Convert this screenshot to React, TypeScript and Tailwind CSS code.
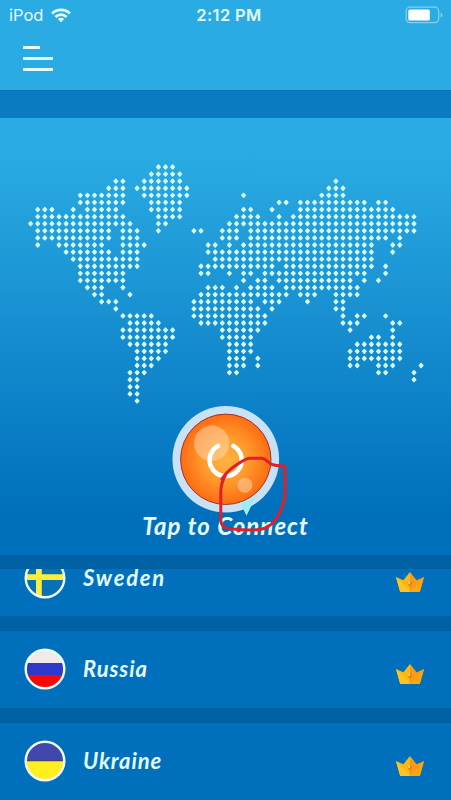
import React from "react";

// Each entry is one map row: inclusive [first, last] column runs.
const MAP_ROWS: number[][][] = [
  [[18, 20]],
  [[17, 21]],
  [[12, 13], [16, 21], [43, 43]],
  [[11, 13], [15, 22], [42, 44]],
  [[7, 13], [16, 22], [30, 30], [41, 44]],
  [[7, 13], [17, 21], [35, 36], [38, 47], [49, 50]],
  [[1, 3], [6, 6], [8, 12], [17, 21], [30, 31], [34, 34], [38, 51]],
  [[1, 13], [18, 21], [29, 32], [35, 35], [37, 54]],
  [[0, 14], [18, 19], [28, 54]],
  [[1, 11], [13, 15], [18, 18], [23, 24], [27, 29], [31, 54]],
  [[1, 11], [13, 15], [27, 29], [31, 50], [52, 52]],
  [[1, 1], [4, 10], [13, 16], [25, 26], [28, 28], [30, 48], [51, 52]],
  [[5, 11], [13, 15], [25, 48], [51, 51]],
  [[6, 15], [26, 48]],
  [[7, 15], [24, 34], [36, 48], [50, 50]],
  [[7, 13], [24, 25], [28, 28], [30, 31], [33, 47], [50, 50]],
  [[7, 13], [30, 30], [32, 33], [35, 45], [47, 47], [49, 49]],
  [[8, 10], [13, 13], [25, 27], [29, 29], [31, 34], [36, 46]],
  [[9, 10], [14, 14], [24, 36], [38, 40], [43, 46]],
  [[10, 12], [23, 31], [33, 35], [39, 39], [43, 44]],
  [[12, 12], [23, 32], [34, 34], [43, 44]],
  [[13, 17], [23, 33], [44, 44], [46, 47], [50, 50]],
  [[14, 18], [24, 33], [44, 46], [51, 52]],
  [[13, 20], [27, 32], [45, 45], [51, 51]],
  [[13, 20], [27, 31], [48, 49], [51, 51]],
  [[14, 19], [28, 31], [46, 52]],
  [[15, 19], [28, 31], [45, 52]],
  [[15, 18], [28, 30], [32, 32], [45, 52]],
  [[15, 17], [28, 30], [32, 32], [45, 46], [49, 51], [55, 55]],
  [[14, 16], [28, 29], [49, 50], [54, 54]],
  [[14, 15], [54, 54]],
  [[14, 15]],
  [[14, 15]],
  [[15, 15]],
];

const mapPath = MAP_ROWS.flatMap((runs, r) =>
  runs.flatMap(([a, b]) =>
    Array.from({ length: b - a + 1 }, (_, i) => {
      const x = 30.6 + (a + i) * 7.1;
      const y = 9 + r * 7.09;
      return `M${x.toFixed(2)} ${(y - 1.9).toFixed(2)}l1.7 1.9l-1.7 1.9l-1.7-1.9z`;
    })
  )
).join("");

function WorldMap() {
  return (
    <svg className="block h-[248px] w-[451px]" viewBox="0 0 451 248">
      <path d={mapPath} fill="#d6fcff" stroke="#d6fcff" strokeWidth="1.5" strokeLinejoin="round" />
    </svg>
  );
}

function StatusBar() {
  return (
    <div className="grid h-[30px] grid-cols-3 items-center pl-[9px] pr-2 text-[#e2fbff]">
      <div className="flex items-center gap-2">
        <span className="font-['Inter',sans-serif] text-[16.5px] leading-none">iPod</span>
        <svg className="h-[15px] w-5" viewBox="0 0 20 15">
          <g fill="none" stroke="#e2fbff" strokeWidth="2.8">
            <path d="M1.1 5.5a12.6 12.6 0 0 1 17.8 0" />
            <path d="M4.4 8.9a7.9 7.9 0 0 1 11.2 0" />
          </g>
          <path d="M10 14.2l-3.2-3.2a4.5 4.5 0 0 1 6.4 0z" fill="#e2fbff" />
        </svg>
      </div>
      <span className="whitespace-nowrap pl-[6px] text-center font-['Inter',sans-serif] text-[16.5px] font-semibold leading-none tracking-[0.35px]">
        2:12 PM
      </span>
      <div className="flex items-center justify-end">
        <svg className="h-[18px] w-[38px]" viewBox="0 0 38 18">
          <rect x="1.1" y="1.2" width="32.6" height="15.4" rx="4" fill="none" stroke="#7fd0f1" strokeWidth="1.3" />
          <rect x="3.3" y="3.4" width="21.5" height="11" rx="1.5" fill="#fff" />
          <path d="M35.6 6.3q2 1 2 2.7t-2 2.7z" fill="#7fd0f1" />
        </svg>
      </div>
    </div>
  );
}

function PowerButton() {
  return (
    <svg className="block size-[108px]" viewBox="172 405 108 108">
      <defs>
        <radialGradient id="orange" cx="0.5" cy="0.5" r="0.5">
          <stop offset="0" stopColor="#ffb340" />
          <stop offset="0.5" stopColor="#ff9a2c" />
          <stop offset="1" stopColor="#fd6c12" />
        </radialGradient>
      </defs>
      <circle cx="225.8" cy="459.2" r="53.3" fill="#c9e1f5" />
      <circle cx="225.8" cy="459.3" r="45.2" fill="url(#orange)" stroke="#a5302a" strokeWidth="1" />
      <circle cx="211.7" cy="443.3" r="17.7" fill="#ffe0c4" fillOpacity="0.45" />
      <circle cx="244.9" cy="485.3" r="7.5" fill="#ffe0c4" fillOpacity="0.45" />
      <path d="M218 446a16 16 0 1 0 15.4 0" fill="none" stroke="#fff" strokeWidth="4.6" strokeLinecap="round" />
    </svg>
  );
}

function Crown() {
  return (
    <svg className="h-5 w-7" viewBox="0 0 28 20">
      <path d="M0 5l7.4 3.2L14 0v20H4.2z" fill="#fdb813" />
      <path d="M28 5l-7.4 3.2L14 0v20h9.8z" fill="#f99a1c" />
      <path d="M4.2 20L0 5l14 15z" fill="#ffc41f" />
      <path d="M14 20L28 5l-4.2 15z" fill="#ffa60d" />
      <path d="M14 7.7l2.6 3.6L14 16l-2.6-4.7z" fill="#e58a0c" />
      <path d="M11.4 11.3L14 8v4.2z" fill="#ffd65a" />
    </svg>
  );
}

const FLAGS: Record<string, React.ReactNode> = {
  Sweden: (
    <>
      <path fill="#0871b3" d="M0 0h42v42H0z" />
      <path fill="#fbed3a" d="M12 0h5.8v42H12zM0 17.3h42v5.8H0z" />
    </>
  ),
  Russia: (
    <>
      <path fill="#efebe8" d="M0 0h42v15H0z" />
      <path fill="#2e39cc" d="M0 15h42v12H0z" />
      <path fill="#fb0505" d="M0 27h42v15H0z" />
    </>
  ),
  Ukraine: (
    <>
      <path fill="#4147ad" d="M0 0h42v21H0z" />
      <path fill="#ffef1f" d="M0 21h42v21H0z" />
      <path fill="#4a4560" d="M0 20.3h42v1H0z" />
    </>
  ),
};

function Flag({ name }: { name: string }) {
  return (
    <svg className="size-[42px] shrink-0" viewBox="0 0 42 42">
      <clipPath id={`flag-${name}`}>
        <circle cx="21" cy="21" r="19.5" />
      </clipPath>
      <g clipPath={`url(#flag-${name})`}>{FLAGS[name]}</g>
      <circle cx="21" cy="21" r="19.3" fill="none" stroke="#effdff" strokeWidth="2.4" />
    </svg>
  );
}

const nameClass = "ml-[17.5px] flex-1 font-['Lato',sans-serif] text-[22px] font-bold italic text-[#e2fbff]";

function CountryRow({ name }: { name: string }) {
  return (
    <div className="flex h-[77px] w-full shrink-0 items-center pb-px pl-[23.5px] pr-[27.5px]">
      <Flag name={name} />
      <span className={`${nameClass} leading-[26px] tracking-[0.9px]`}>{name}</span>
      <div className="pt-[9px]">
        <Crown />
      </div>
    </div>
  );
}

// The first row is scrolled partly under the divider, so only the lower part of its flag shows.
function ScrolledRow({ name }: { name: string }) {
  return (
    <div className="flex h-[47px] w-full shrink-0 items-start pl-[23.5px] pr-[27.5px]">
      <div className="flex h-[30px] items-end overflow-hidden">
        <Flag name={name} />
      </div>
      <span className={`${nameClass} leading-[17px] tracking-[1.8px]`}>{name}</span>
      <div className="pt-[3px]">
        <Crown />
      </div>
    </div>
  );
}

function Annotation() {
  return (
    <svg className="pointer-events-none absolute left-0 top-0 h-[800px] w-[451px]" viewBox="0 0 451 800">
      <path d="M240 502.3q9-1 16-6l-9.5 19.5z" fill="#9beef5" />
      <path
        d="M222 479C225 474 230 469 237 464.5C243 460.5 246 458.3 250 458.3H262C266 459 269 463 272 464.5C276 465.8 281 465.5 285 466.3V494C285 502 281 510 278.5 515C275 521 269 527 264 528.5C256 531 240 529.8 230 528.8C224 528 220.8 526 220.8 520V492C220.8 485 222.5 480 226 474"
        fill="none"
        stroke="#e01f28"
        strokeWidth="3"
        strokeLinejoin="round"
        strokeLinecap="round"
      />
    </svg>
  );
}

export default function App() {
  return (
    <div className="relative flex h-[800px] w-[451px] flex-col overflow-hidden bg-[#0070bc]">
      <header className="h-[90px] bg-[#2aabe3]">
        <StatusBar />
        <div className="flex flex-col gap-[8px] pl-[22.5px] pt-[16px]">
          <div className="h-[3px] w-[17.5px] bg-[#e2fbff]" />
          <div className="h-[3px] w-[30.5px] bg-[#e2fbff]" />
          <div className="h-[3px] w-[30.5px] bg-[#e2fbff]" />
        </div>
      </header>
      <div className="h-7 border-t border-[#0b70ae] bg-[#0a7bc1]" />
      <main className="flex h-[437px] flex-col items-center bg-linear-to-b from-[#2aabe3] from-8% to-[#0070bc] to-90% pt-10">
        <WorldMap />
        <div className="-mt-px">
          <PowerButton />
        </div>
        <p className="-mt-px whitespace-nowrap font-['Lato',sans-serif] text-[24px] font-bold italic leading-7 tracking-[1.05px] text-[#e6fcff]">
          Tap to Connect
        </p>
      </main>
      <div className="h-[14px] bg-[#0060a4]" />
      <section className="flex flex-1 flex-col">
        <ScrolledRow name="Sweden" />
        <div className="h-[15px] bg-[#0060a4]" />
        <CountryRow name="Russia" />
        <div className="h-[15px] bg-[#0060a4]" />
        <CountryRow name="Ukraine" />
      </section>
      <Annotation />
    </div>
  );
}
